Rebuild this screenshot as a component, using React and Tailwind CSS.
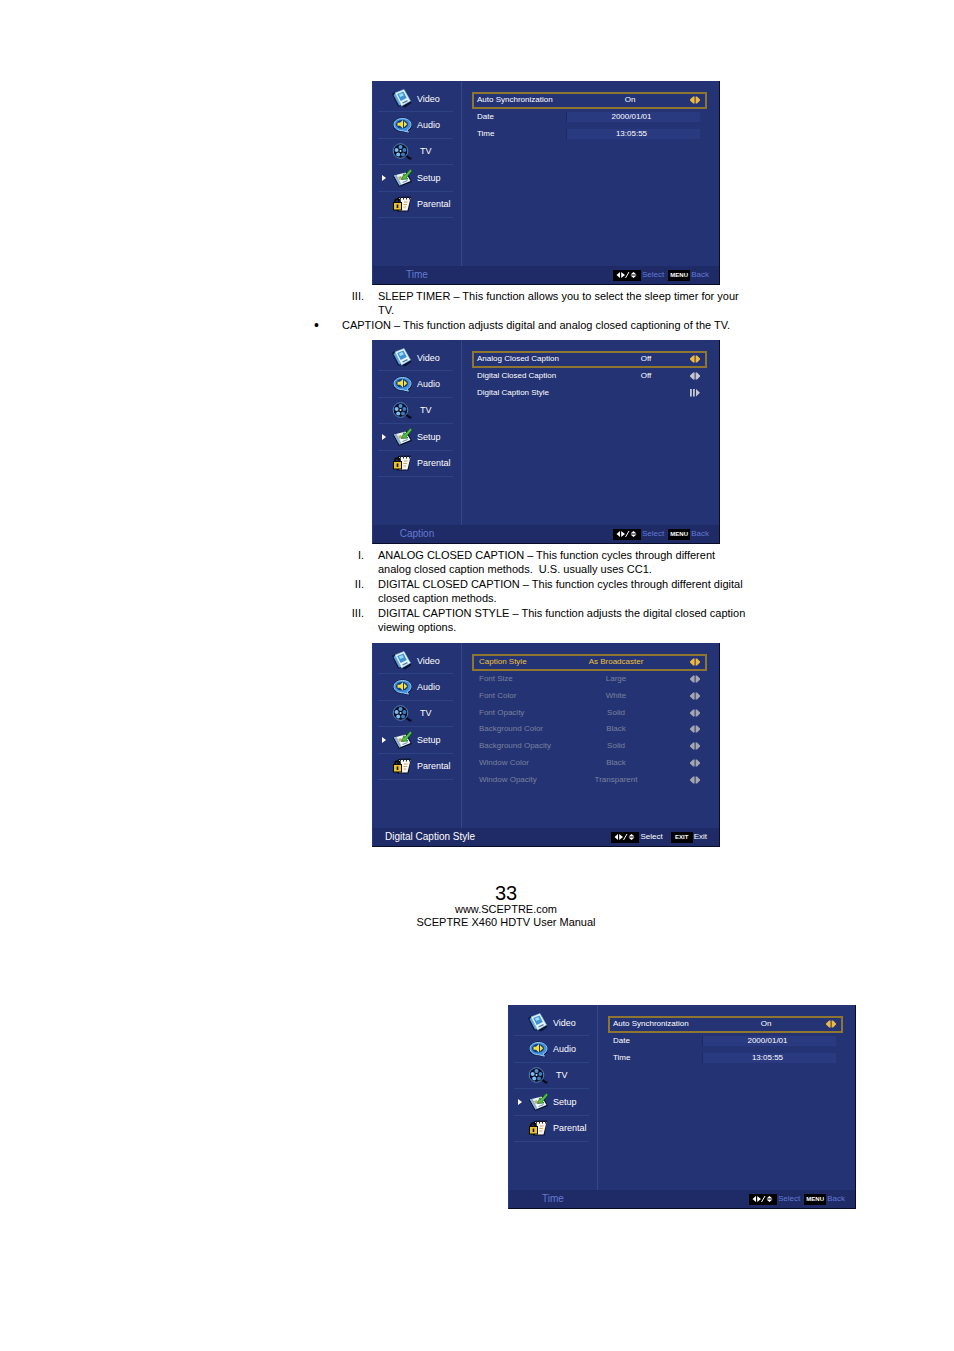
import React from 'react';

function VideoIcon () {
  return (
    <svg viewBox="0 0 20 20" className="h-5 w-5 shrink-0">
      <path d="M10 17 L18 12 L19.500 14 L13 18.500 Z" fill="#0a1230" />
      <path d="M0 5 L3 3 L10 17 L6 17.500 Z" fill="#0c1738" />
      <path d="M1.500 6 L3.500 4.500 L9 16 L7 16.500 Z" fill="#5aa0dc" />
      <path d="M3 4 L12 0.500 L18.500 12 L9.500 17 Z" fill="#e6f4fc" stroke="#8cc4ec" strokeWidth="0.600" />
      <path d="M5.200 5 L11.400 2.500 L14.800 9 L8.700 12 Z" fill="#3f92d4" />
      <path d="M6.800 5.500 L10.400 4 L11.800 6.500 L8.200 8 Z" fill="#9cdcfc" />
      <path d="M10.500 14 L15.500 11.600" stroke="#4a78ac" strokeWidth="1.200" />
    </svg>
  );
}

function AudioIcon () {
  return (
    <svg viewBox="0 0 20 20" className="h-5 w-5 shrink-0">
      <path d="M10 2.500 C16 2.500 20 5.500 20 10 C20 13 18.500 15 16.500 16 L18 18.500 L11 17 C5 17 1 14 1 10 C1 5.500 5 2.500 10 2.500 Z" fill="#0a1740" />
      <path d="M10.500 3.500 C15.500 3.500 19 6 19 9.500 C19 12 17.500 14 15 15 L16.500 17.200 L11 15.800 C5.500 15.800 2 13 2 9.500 C2 6 5.500 3.500 10.500 3.500 Z" fill="#3f90e0" stroke="#96ccf6" strokeWidth="1" />
      <ellipse cx="10" cy="9.300" rx="6" ry="4.300" fill="#173c78" />
      <path d="M5.500 7.800 H8 L11 5 V13.500 L8 10.700 H5.500 Z" fill="#f4e03c" />
      <path d="M12 6.300 L15.200 9.300 L12 12.300 Z" fill="#f4e03c" />
    </svg>
  );
}

function TvIcon () {
  return (
    <svg viewBox="0 0 20 20" className="h-5 w-5 shrink-0">
      <path d="M13 15 C16 14 15.500 18 19.500 17.500" fill="none" stroke="#060a1c" strokeWidth="2" />
      <circle cx="8.500" cy="10" r="7.300" fill="#070c1e" stroke="#4f86c0" strokeWidth="1" />
      <circle cx="8.500" cy="6" r="2" fill="#4d93d6" />
      <circle cx="4.600" cy="9" r="2" fill="#7ebcf0" />
      <circle cx="12.400" cy="9" r="2" fill="#3d7cc0" />
      <circle cx="6.200" cy="13.600" r="2" fill="#7ebcf0" />
      <circle cx="11" cy="13.600" r="2" fill="#3d7cc0" />
      <circle cx="8.500" cy="10" r="1" fill="#c4dcf0" />
    </svg>
  );
}

function SetupIcon () {
  return (
    <svg viewBox="0 0 20 20" className="h-5 w-5 shrink-0">
      <path d="M1 8 L15 4 L20 14 L7 19 Z" fill="#0a1230" />
      <path d="M2 7.500 L13.500 4.500 L18.500 13 L7.500 17.500 Z" fill="#eef6f8" />
      <path d="M2 7.500 L4.500 6.800 L9.500 16.700 L7.500 17.500 Z" fill="#86b0d0" />
      <path d="M6 9 L9 8 L10.500 10.800 L7.500 12 Z" fill="#c0ac6c" />
      <path d="M10.500 14.500 L15.500 12.500" stroke="#6b8ca8" strokeWidth="1" />
      <path d="M18.500 1 L12.500 7.500 L12 5.500 L9.500 11.500 L16 11 L14.500 9.500 L20 3 Z" fill="#4cc43c" stroke="#124818" strokeWidth="0.600" />
    </svg>
  );
}

function ParentalIcon () {
  return (
    <svg viewBox="0 0 20 20" className="h-5 w-5 shrink-0">
      <path d="M6 3 L19 2.500 L16.500 17.500 L5 17.500 Z" fill="#0a1024" />
      <path d="M7 4 L18.500 4 L15.500 16.500 L7 16.500 Z" fill="#f6f6f0" />
      <path d="M8.500 2 V5.500 M11.500 2 V5.500 M14.500 2 V5.500 M17.500 2 V5.500" stroke="#1c2440" strokeWidth="1" />
      <path d="M12 8 H15.500 M11.500 10.500 H15 M11.500 13 H14" stroke="#e0a060" strokeWidth="1" />
      <path d="M3 9 V7.500 C3 4.500 8 4.500 8 7.500 V9" fill="none" stroke="#0e0c08" strokeWidth="1.800" />
      <rect x="1.500" y="8.500" width="8" height="7.500" fill="#ecc22e" stroke="#0e0c08" strokeWidth="1" />
      <path d="M5.500 10.500 V14" stroke="#0e0c08" strokeWidth="1.600" />
    </svg>
  );
}

const menu = [
  { name: 'Video', icon: <VideoIcon /> },
  { name: 'Audio', icon: <AudioIcon /> },
  { name: 'TV', icon: <TvIcon /> },
  { name: 'Setup', icon: <SetupIcon /> },
  { name: 'Parental', icon: <ParentalIcon /> }
];

function Arrows ({ enter }) {
  return (
    <svg viewBox="0 0 10 8" className="h-2 w-[10px]" fill="currentColor">
      {enter
        ? <path d="M0 0 H1.800 V7.500 H0 Z M3 0 H4.800 V7.500 H3 Z M6 0 L10 3.700 L6 7.500 Z" />
        : <path d="M4.600 0.500 V7.500 H3.200 L0 4.600 V3.400 L3.200 0.500 Z M5.600 0.500 H7 L10 3.400 V4.600 L7 7.500 H5.600 Z" />}
    </svg>
  );
}

function ArrowKeys () {
  return (
    <svg viewBox="0 0 22 8" className="h-2 w-[22px]" fill="#ffffff">
      <path d="M4 1 V7 L0.500 4 Z M5.200 1 V7 L9 4 Z" />
      <path d="M9.500 7 L13 1" stroke="#ffffff" strokeWidth="1" />
      <path d="M14.500 3.400 L17.500 1 L20.500 3.400 Z M14.500 4.600 L17.500 7 L20.500 4.600 Z" />
    </svg>
  );
}

function Screen ({ title, rows, labelClass, valueClass, listClass, exit }) {
  return (
    <div className="flex h-[204px] w-[348px] flex-col border-b border-l border-r border-b-[#080c28] border-l-[#1f3c8a] border-r-[#080c28] bg-[#243373] text-white">
      <div className="flex grow">
        <nav className="w-[89px] shrink-0 border-r border-[#34468c] pt-[5px] pl-[5px]">
          <ul className="grid h-[132px] w-[75px] grid-rows-5">
            {menu.map(item => (
              <li key={item.name} className="flex border-b border-[#2e4286]">
                <button className="flex w-full items-center text-left text-[9px] leading-[12px]">
                  <span className="flex w-[14px] shrink-0 pl-1">
                    {item.name === 'Setup' && (
                      <svg viewBox="0 0 4 6" className="h-[6px] w-1" fill="#ffffff"><path d="M0 0 L4 3 L0 6 Z" /></svg>
                    )}
                  </span>
                  {item.icon}
                  <span className={item.name === 'TV' ? 'pl-2' : 'pl-[5px]'}>{item.name}</span>
                </button>
              </li>
            ))}
          </ul>
        </nav>
        <div className="grow pt-[11px] pr-3 pl-[10px]">
          <ul className={`grid text-[8px] leading-[10px] ${listClass}`}>
            {rows.map(row => (
              <li
                key={row.label}
                className={`flex items-center border-2 ${row.selected ? 'border-[#8f7630]' : 'border-transparent'} ${row.tone || 'text-white'}`}
              >
                <span className={`shrink-0 whitespace-nowrap ${labelClass}`}>{row.label}</span>
                {row.field
                  ? <span className="w-[134px] shrink-0 border-l border-[#1c2860] bg-[#2a3a80] pr-1 text-center">{row.value}</span>
                  : <span className={`text-center ${valueClass}`}>{row.value}</span>}
                {!row.field && (
                  <button aria-label={row.label} className={`mr-[5px] ml-auto ${row.arrow}`}>
                    <Arrows enter={row.enter} />
                  </button>
                )}
              </li>
            ))}
          </ul>
        </div>
      </div>
      <div className={`flex h-[18px] items-center bg-[#1e2b66] text-[8px] leading-[10px] ${exit ? 'pr-3 text-white' : 'pr-[10px] text-[#6479d2]'}`}>
        <span className={exit ? 'pl-3 text-[10px]' : 'w-[88px] text-center text-[10px]'}>{title}</span>
        <span className="ml-auto flex h-[11px] w-7 items-center justify-center bg-black"><ArrowKeys /></span>
        <span className="pl-px">Select</span>
        <span className={`flex h-[11px] w-[22px] items-center justify-center bg-black text-[6px] font-bold text-white ${exit ? 'ml-2' : 'ml-1'}`}>
          {exit ? 'EXIT' : 'MENU'}
        </span>
        <span className="pl-px">{exit ? 'Exit' : 'Back'}</span>
      </div>
    </div>
  );
}

const gold = 'text-[#f0b83c]';
const silver = 'text-[#c4c6cc]';
const gray = 'text-[#a4a6ae]';
const dim = 'text-[#7a819e]';

const timeRows = [
  { label: 'Auto Synchronization', value: 'On', selected: true, arrow: gold },
  { label: 'Date', value: '2000/01/01', field: true },
  { label: 'Time', value: '13:05:55', field: true }
];

const captionRows = [
  { label: 'Analog Closed Caption', value: 'Off', selected: true, arrow: gold },
  { label: 'Digital Closed Caption', value: 'Off', arrow: silver },
  { label: 'Digital Caption Style', value: '', arrow: silver, enter: true }
];

const styleRows = [
  { label: 'Caption Style', value: 'As Broadcaster', selected: true, tone: 'text-[#ecc238]', arrow: gold },
  { label: 'Font Size', value: 'Large', tone: dim, arrow: gray },
  { label: 'Font Color', value: 'White', tone: dim, arrow: gray },
  { label: 'Font Opacity', value: 'Solid', tone: dim, arrow: gray },
  { label: 'Background Color', value: 'Black', tone: dim, arrow: gray },
  { label: 'Background Opacity', value: 'Solid', tone: dim, arrow: gray },
  { label: 'Window Color', value: 'Black', tone: dim, arrow: gray },
  { label: 'Window Opacity', value: 'Transparent', tone: dim, arrow: gray }
];

function TimeScreen () {
  return (
    <Screen
      title="Time"
      rows={timeRows}
      listClass="h-[50px] grid-rows-3"
      labelClass="w-[92px] pl-[3px]"
      valueClass="w-[124px] pl-1"
    />
  );
}

function Item ({ mark, children }) {
  return (
    <li className="flex">
      <span className="w-[52px] shrink-0 text-right">{mark}</span>
      <p className="ml-[14px] w-[372px]">{children}</p>
    </li>
  );
}

export default function App () {
  return (
    <div className="min-h-screen bg-white font-['Liberation_Sans',Arial,sans-serif] text-[11px] leading-[14px] text-black">
      <main className="pt-[81px] pl-[312px]">
        <div className="pl-[60px]"><TimeScreen /></div>
        <ul className="mt-1 flex flex-col gap-px">
          <Item mark="III.">SLEEP TIMER – This function allows you to select the sleep timer for your TV.</Item>
          <li className="flex">
            <span className="w-[30px] pl-[2px] text-[14px]">•</span>
            <p>CAPTION – This function adjusts digital and analog closed captioning of the TV.</p>
          </li>
        </ul>
        <div className="mt-2 pl-[60px]">
          <Screen
            title="Caption"
            rows={captionRows}
            listClass="h-[50px] grid-rows-3"
            labelClass="w-[128px] pl-[3px]"
            valueClass="w-[88px]"
          />
        </div>
        <ol className="mt-1 flex flex-col gap-px">
          <Item mark="I.">ANALOG CLOSED CAPTION – This function cycles through different analog closed caption methods.&nbsp; U.S. usually uses CC1.</Item>
          <Item mark="II.">DIGITAL CLOSED CAPTION – This function cycles through different digital closed caption methods.</Item>
          <Item mark="III.">DIGITAL CAPTION STYLE – This function adjusts the digital closed caption viewing options.</Item>
        </ol>
        <div className="mt-[9px] pl-[60px]">
          <Screen
            title="Digital Caption Style"
            rows={styleRows}
            listClass="h-[134px] grid-rows-8"
            labelClass="w-[98px] pl-[5px]"
            valueClass="w-[88px]"
            exit
          />
        </div>
        <footer className="mt-9 w-[388px] text-center leading-[13px]">
          <p className="text-[20px] leading-[20px]">33</p>
          <p><a href="#">www.SCEPTRE.com</a></p>
          <p>SCEPTRE X460 HDTV User Manual</p>
        </footer>
      </main>
      <section className="pt-[76px] pb-[142px] pl-[508px]">
        <TimeScreen />
      </section>
    </div>
  );
}
